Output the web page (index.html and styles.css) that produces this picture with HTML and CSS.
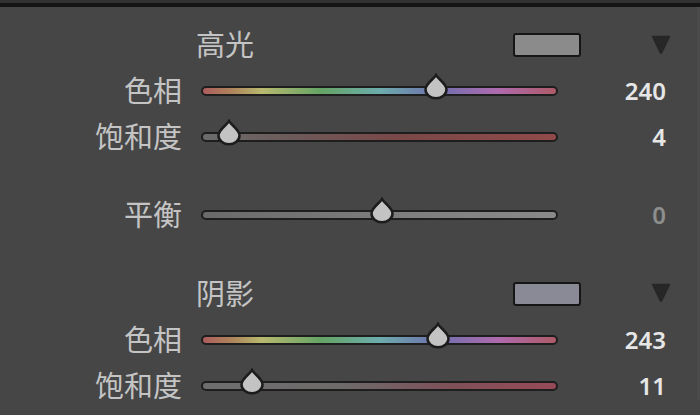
FILE: index.html
```html
<!DOCTYPE html>
<html>
<head>
<meta charset="utf-8">
<link rel="stylesheet" href="styles.css">
</head>
<body>
<div class="topbar"></div>
<div class="panel">
  <div class="head">
    <span class="title">高光</span>
    <span class="swatch swatch-hl"></span>
    <svg class="tri" viewBox="0 0 20 19"><path d="M1.5 1.5 H18.5 L10.8 17.5 Q10 18.6 9.2 17.5 Z" fill="#272727" stroke="#272727" stroke-width="1.5" stroke-linejoin="round"/></svg>
  </div>
  <div class="row">
    <span class="label">色相</span>
    <div class="slider">
      <div class="track hue"></div>
      <svg class="thumb" style="left:235px" viewBox="0 0 26 27"><path d="M13 2 C15 6 23.5 10.5 23.5 16.5 A10.5 8.8 0 0 1 2.5 16.5 C2.5 10.5 11 6 13 2 Z"/></svg>
    </div>
    <span class="val">240</span>
  </div>
  <div class="row">
    <span class="label">饱和度</span>
    <div class="slider">
      <div class="track sat-hl"></div>
      <svg class="thumb" style="left:28px" viewBox="0 0 26 27"><path d="M13 2 C15 6 23.5 10.5 23.5 16.5 A10.5 8.8 0 0 1 2.5 16.5 C2.5 10.5 11 6 13 2 Z"/></svg>
    </div>
    <span class="val">4</span>
  </div>
  <div class="row row-bal">
    <span class="label">平衡</span>
    <div class="slider">
      <div class="track bal"></div>
      <svg class="thumb" style="left:181px" viewBox="0 0 26 27"><path d="M13 2 C15 6 23.5 10.5 23.5 16.5 A10.5 8.8 0 0 1 2.5 16.5 C2.5 10.5 11 6 13 2 Z"/></svg>
    </div>
    <span class="val dim">0</span>
  </div>
  <div class="head head-sh">
    <span class="title">阴影</span>
    <span class="swatch swatch-sh"></span>
    <svg class="tri" viewBox="0 0 20 19"><path d="M1.5 1.5 H18.5 L10.8 17.5 Q10 18.6 9.2 17.5 Z" fill="#272727" stroke="#272727" stroke-width="1.5" stroke-linejoin="round"/></svg>
  </div>
  <div class="row">
    <span class="label">色相</span>
    <div class="slider">
      <div class="track hue"></div>
      <svg class="thumb" style="left:237px" viewBox="0 0 26 27"><path d="M13 2 C15 6 23.5 10.5 23.5 16.5 A10.5 8.8 0 0 1 2.5 16.5 C2.5 10.5 11 6 13 2 Z"/></svg>
    </div>
    <span class="val">243</span>
  </div>
  <div class="row">
    <span class="label">饱和度</span>
    <div class="slider">
      <div class="track sat-sh"></div>
      <svg class="thumb" style="left:51px" viewBox="0 0 26 27"><path d="M13 2 C15 6 23.5 10.5 23.5 16.5 A10.5 8.8 0 0 1 2.5 16.5 C2.5 10.5 11 6 13 2 Z"/></svg>
    </div>
    <span class="val">11</span>
  </div>
</div>
</body>
</html>
```

FILE: styles.css
```css
html, body {
  margin: 0;
  padding: 0;
}
body {
  width: 700px;
  height: 415px;
  overflow: hidden;
  background: #464646;
  font-family: "Noto Sans CJK SC", "Noto Sans", sans-serif;
}
.topbar {
  height: 3px;
  background: #313131;
  border-bottom: 4px solid #141414;
}
.panel {
  padding-top: 15px;
  border-right: 3px solid #4b4b4b;
  height: 393px;
  box-sizing: border-box;
}
.head {
  display: flex;
  align-items: center;
  height: 46px;
  padding-left: 196px;
}
.head-sh {
  height: 47px;
  margin-top: 32px;
}
.title {
  font-size: 29px;
  line-height: 1;
  color: #c4c4c4;
  flex: 1;
  margin-top: -3px;
}
.swatch {
  width: 68px;
  height: 24px;
  box-sizing: border-box;
  border: 2px solid #161616;
  border-radius: 3px;
}
.swatch-hl {
  background: #8b8b8b;
}
.swatch-sh {
  background: #8a8a97;
}
.tri {
  width: 20px;
  height: 19px;
  margin-left: 70px;
  margin-right: 26px;
  margin-top: -2px;
}
.row {
  display: flex;
  align-items: center;
  height: 46px;
}
.row-bal {
  margin-top: 32px;
}
.label {
  width: 182px;
  text-align: right;
  font-size: 29px;
  line-height: 1;
  color: #c4c4c4;
  margin-top: -3px;
}
.slider {
  position: relative;
  margin-left: 19px;
  width: 357px;
  height: 26px;
  display: flex;
  align-items: center;
}
.track {
  width: 100%;
  height: 10px;
  box-sizing: border-box;
  border: 2.5px solid #1e1e1e;
  border-radius: 5px;
}
.hue {
  background: linear-gradient(to right,
    hsl(0, 32%, 52%) 0%,
    hsl(30, 34%, 52%) 8.3%,
    hsl(60, 34%, 58%) 16.7%,
    hsl(120, 26%, 52%) 33.3%,
    hsl(180, 28%, 55%) 50%,
    hsl(240, 28%, 56%) 66.7%,
    hsl(300, 30%, 55%) 83.3%,
    hsl(350, 34%, 52%) 100%);
}
.sat-hl {
  background: linear-gradient(to right, #6c6c6c 0%, #6d5a5a 25%, #7a4848 55%, #914a4a 100%);
}
.sat-sh {
  background: linear-gradient(to right, #6e6e6e 0%, #6e6a6a 40%, #7e5058 70%, #974a58 100%);
}
.bal {
  background: linear-gradient(to right, #6a6a6a 0%, #7c7c7c 50%, #8a8a8a 100%);
}
.thumb {
  position: absolute;
  top: -5px;
  width: 26px;
  height: 27px;
  margin-left: -13px;
}
.thumb path {
  fill: #c3c3c3;
  stroke: #1c1c1c;
  stroke-width: 2.5;
}
.val {
  width: 108px;
  text-align: right;
  font-family: "Noto Sans", sans-serif;
  font-weight: 600;
  font-size: 24px;
  line-height: 1;
  color: #e6e6e6;
}
.val.dim {
  color: #8e8e8e;
}
```
